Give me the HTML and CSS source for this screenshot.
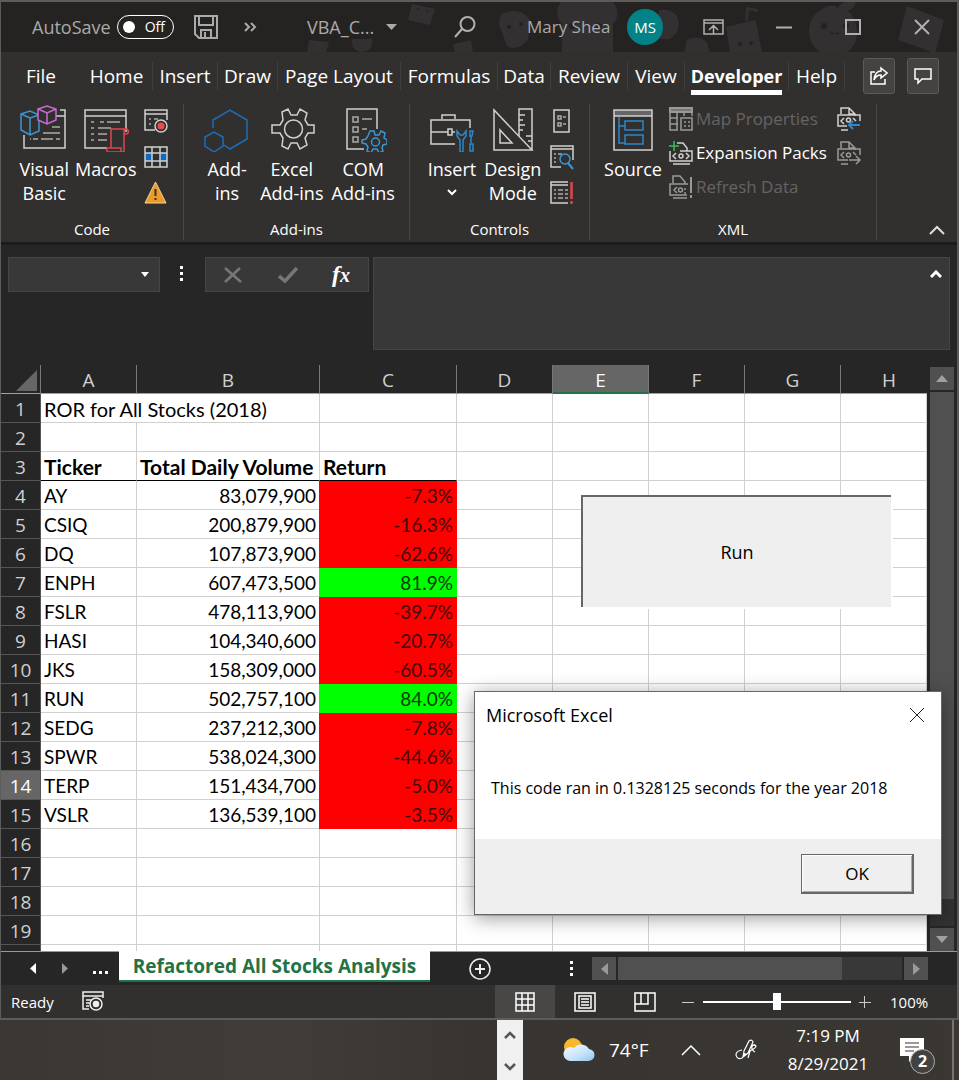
FILE: index.html
```
<!DOCTYPE html>
<html lang="en">
<head>
<meta charset="utf-8">
<meta name="viewport" content="width=device-width, initial-scale=1">
<title>VBA Challenge - Excel</title>
<link rel="stylesheet" href="styles.css">
</head>
<body>
<main class="window">
  <header class="titlebar">
    <svg class="doodles" viewBox="0 0 660 50" width="660" height="50" aria-hidden="true">
      <g fill="#333031">
        <path d="M115 2l23 5-5 16-22-5z"/><path d="M12 38l20 2-3 11H10z"/><path d="M55 37h20q2 12-10 13-11-1-10-13zM156 42l18-4 2 13h-18z"/>
        <path d="M205 12q18-8 28 6l-2 20q-12 12-21 6l-5-14q-6-10 0-18z"/>
        <path d="M264 0h52q9 12 0 22v29h-51V22q-9-10-1-22z"/>
        <path d="M362 8q18-2 20 13-1 12-10 16h-12zM390 38q12-6 20 3l3 10h-26z"/>
        <path d="M429 25l29-7 2 7 5 26h-32zM449 5l12 2-1 3-8-2-1 11h-3z"/>
        <path d="M523 8q12-8 18-2 4-8 18-6-2 8-9 8 10 8 10 22 0 16-13 21h-22q-14-8-13-24 1-12 11-19z"/>
        <path d="M610 4l37 14-9 33-37-13z"/>
      </g>
      <g fill="#242321"><circle cx="212" cy="25" r="2"/><circle cx="224" cy="22" r="2"/><circle cx="275" cy="24" r="3"/><circle cx="302" cy="24" r="3"/><circle cx="121" cy="7" r="1"/><circle cx="130" cy="9" r="1"/><circle cx="527" cy="24" r="3"/><circle cx="549" cy="24" r="3"/><circle cx="443" cy="42" r="2"/><circle cx="454" cy="41" r="2"/><path d="M534 29q4 5 8 0v3h-8z"/></g>
    </svg>
    <label class="autosave">AutoSave <span class="toggle"><input type="checkbox" aria-label="AutoSave"><span>Off</span></span></label>
    <button class="tool save" aria-label="Save"><svg width="26" height="26" viewBox="0 0 26 26"><path d="M2 2h22v22H6l-4-4zM6 2v9h14V2M8 24v-8h10v8M12 18v6" fill="none" stroke="#aaa" stroke-width="2"/></svg></button>
    <button class="tool more" aria-label="More commands"><svg width="14" height="12" viewBox="0 0 14 12"><path d="M2 2l4 4-4 4M8 2l4 4-4 4" fill="none" stroke="#aaa" stroke-width="2"/></svg></button>
    <button class="tool filename">VBA_C... <svg width="12" height="6"><path d="M0 0h11L5.500 6z" fill="#aaa"/></svg></button>
    <button class="tool search" aria-label="Search"><svg width="24" height="24" viewBox="0 0 24 24"><g fill="none" stroke="#b0b0b0" stroke-width="2"><circle cx="14.500" cy="9" r="7"/><path d="M9 14L2 22"/></g></svg></button>
    <button class="tool account"><span>Mary Shea</span><span class="avatar">MS</span></button>
    <button class="tool display" aria-label="Ribbon display options"><svg width="22" height="18" viewBox="0 0 22 18"><path d="M1 2h19v14H1zM1 5h19M10.500 16V8M6 12l4.500-4.500L15 12" fill="none" stroke="#b0b0b0" stroke-width="1.500"/></svg></button>
    <div class="caption">
      <button class="tool" aria-label="Minimize"><svg width="18" height="18"><path d="M1 9.500h16" stroke="#b0b0b0" stroke-width="2"/></svg></button>
      <button class="tool" aria-label="Maximize"><svg width="18" height="18"><path d="M2 2h14v14H2z" fill="none" stroke="#b0b0b0" stroke-width="2"/></svg></button>
      <button class="tool" aria-label="Close"><svg width="18" height="18"><path d="M2 2l14 14M16 2L2 16" stroke="#b0b0b0" stroke-width="2"/></svg></button>
    </div>
  </header>

  <div class="menu">
    <nav class="tabs" aria-label="Ribbon tabs">
      <a class="file" href="#file">File</a><a href="#home">Home</a><a href="#insert">Insert</a><a href="#draw">Draw</a><a href="#layout">Page Layout</a><a href="#formulas">Formulas</a><a href="#data">Data</a><a href="#review">Review</a><a href="#view">View</a><a class="active" href="#developer" aria-current="page"><span>Developer</span></a><a href="#help">Help</a>
    </nav>
    <div class="share">
      <button aria-label="Share"><svg width="18" height="20" viewBox="0 0 18 20"><path d="M5 6H1v12h14v-5M11 2l6 5-6 5V9Q6 9 4 14 5 5 11 5z" fill="none" stroke="#fff" stroke-width="1.500"/></svg></button>
      <button aria-label="Comments"><svg width="18" height="18" viewBox="0 0 18 18"><path d="M1 2h16v10H8l-4 4v-4H1z" fill="none" stroke="#fff" stroke-width="1.500"/></svg></button>
    </div>
  </div>

  <section class="ribbon" aria-label="Developer">
    <div class="group g-code">
      <div class="tools">
        <button class="big"><svg width="48" height="48" viewBox="0 0 48 48" fill="none" stroke="#d0cfce" stroke-width="2">
          <path d="M40 6h5v38H4V31M24 12h21" stroke-width="1.500"/><path d="M32 23h8M23 29h17M13 35h5M21 35h12M36 35h4M10 35h1" stroke="#aaa" stroke-width="1.500"/>
          <path d="M1 10l9-3 9 4v16l-9 4-9-5zM1 10l9 4 9-3M10 14v17" fill="#32302f" stroke="#3b96d2" stroke-width="1.500"/>
          <path d="M18 5l9-3 9 3v11l-9 4-9-4zM18 5l9 4 9-4M27 9v11" fill="#32302f" stroke="#c76bd1" stroke-width="1.500"/></svg><span>Visual<br>Basic</span></button>
        <button class="big"><svg width="48" height="48" viewBox="0 0 48 48" fill="none" stroke="#d0cfce" stroke-width="1.500">
          <path d="M25 44H3V6h41v22M3 12h41"/><path d="M9 18h3M18 18h4M25 18h13M9 24h3M16 24h13M9 30h3M16 30h9M9 36h3M16 36h9" stroke="#aaa"/>
          <path d="M29 25h16q3 3 0 5h-3v18H26q-2-1-1-4h4V25M42 30V27q0-2 3-2M29 44h10v4" stroke="#e0454d"/></svg><span>Macros</span></button>
        <div class="smalls">
          <button aria-label="Record Macro"><svg width="26" height="26" viewBox="0 0 26 26" fill="none" stroke="#d0cfce" stroke-width="1.500"><path d="M12 22H2V2h22v10M2 6h22"/><path d="M6 11h2M11 11h4M6 16h2" stroke="#aaa"/><circle cx="18" cy="18" r="6" fill="#32302f"/><circle cx="18" cy="18" r="3.500" fill="#e84c50" stroke="none"/></svg></button>
          <button aria-label="Use Relative References"><svg width="26" height="26" viewBox="0 0 26 26"><path d="M2 9h22v8H2z" fill="#0c6cc0"/><path d="M9 9h8v8H9z" fill="#32302f"/><path d="M2 3h22v20H2zM9 3v20M17 3v20M2 9h22M2 17h22" fill="none" stroke="#d0cfce" stroke-width="1.500"/></svg></button>
          <button aria-label="Macro Security"><svg width="26" height="26" viewBox="0 0 26 26"><path d="M12.500 2L2 23h21z" fill="#ed9b28" stroke="#f5d489"/><path d="M12.500 9v7M12.500 18v2" stroke="#333" stroke-width="2"/></svg></button>
        </div>
      </div>
      <h2>Code</h2>
    </div>
    <div class="group g-addins">
      <div class="tools">
        <button class="big"><svg width="48" height="48" viewBox="0 0 48 48" fill="none" stroke="#1c6dba" stroke-width="1.500"><path d="M10 24V16L27 6l17 10v19L27 45l-6-4M2 33l9-5 9 5v9l-9 6-9-6z"/></svg><span>Add-<br>ins</span></button>
        <button class="big"><svg width="48" height="48" viewBox="0 0 48 48" fill="none" stroke="#d0cfce" stroke-width="1.500"><path d="M14 8l6-3 3 6h6l3-6 7 4-2 7 3 5h6v8h-6l-3 5 2 7-7 4-3-6h-6l-3 6-6-3 1-8-3-5H4v-8h8l3-5z"/><circle cx="25.500" cy="25" r="9"/></svg><span>Excel<br>Add-ins</span></button>
        <button class="big"><svg width="48" height="48" viewBox="0 0 48 48" fill="none" stroke="#d0cfce" stroke-width="1.500"><path d="M25 45H8V5h30v20"/><path d="M14 13h5v5h-5zM14 23h5v5h-5zM14 33h5v5h-5zM23 15h10M23 25h5" stroke="#aaa"/><path d="M31 27h4l1 4h4l2-4 4 2-1 5 3 2v4l-4 1-1 3 1 3-4 2-2-4h-4l-2 4-4-2 1-4-2-3-4-1v-3l4-1 2-3z" stroke="#3b96d2"/><circle cx="36.500" cy="38" r="4" stroke="#3b96d2"/></svg><span>COM<br>Add-ins</span></button>
      </div>
      <h2>Add-ins</h2>
    </div>
    <div class="group g-controls">
      <div class="tools">
        <button class="big"><svg width="48" height="48" viewBox="0 0 48 48" fill="none" stroke="#d0cfce" stroke-width="1.500"><path d="M27 40H3V16h39v8M3 28h17M24 28h3M14 15v-4h13v4M20 25h4v6h-4z"/><path d="M29 27v5l3 4v12h3V36l3-4v-5l-3 4h-3zM42 27h3l-1 5h-2zM43 32v7M42 40h3v7h-3z" stroke="#2d87ca"/></svg><span>Insert</span><svg class="drop" width="10" height="8"><path d="M1 2l4 4 4-4" fill="none" stroke="#fff" stroke-width="2"/></svg></button>
        <button class="big"><svg width="48" height="48" viewBox="0 0 48 48" fill="none" stroke="#d0cfce" stroke-width="1.500"><path d="M5 6v40h38zM11 26v13h12zM30 32V5h13v41M30 11h6M30 16h4M30 21h6M30 26h4M37 32h6M39 37h4"/></svg><span>Design<br>Mode</span></button>
        <div class="smalls">
          <button aria-label="Properties"><svg width="26" height="26" viewBox="0 0 26 26" fill="none" stroke="#d0cfce" stroke-width="1.500"><path d="M5 2h15v22H5z"/><path d="M9 8h3v3H9zM9 15h3v3H9zM14 9h3M14 16h3" stroke="#aaa"/></svg></button>
          <button aria-label="View Code"><svg width="26" height="26" viewBox="0 0 26 26" fill="none" stroke="#d0cfce" stroke-width="1.500"><path d="M12 23H2V2h22v14M2 5h22"/><path d="M5 10h2M9 10h4M5 14h2M5 18h2" stroke="#aaa"/><circle cx="16" cy="15" r="5" stroke="#3b96d2"/><path d="M19 19l5 6" stroke="#3b96d2" stroke-width="2"/></svg></button>
          <button aria-label="Run Dialog"><svg width="26" height="26" viewBox="0 0 26 26" fill="none" stroke="#d0cfce" stroke-width="1.500"><path d="M19 23H2V2h17M2 5h17"/><path d="M5 10h2M9 10h5M16 10h3M5 14h2M9 14h5M16 14h3M5 18h2M9 18h5M16 18h3" stroke="#aaa"/><path d="M22.500 2v17M22.500 21v3" stroke="#e0454d" stroke-width="2.500"/></svg></button>
        </div>
      </div>
      <h2>Controls</h2>
    </div>
    <div class="group g-xml">
      <div class="tools">
        <button class="big"><svg width="48" height="48" viewBox="0 0 48 48" fill="none" stroke="#d0cfce" stroke-width="2"><path d="M5 6h38v6H5z" fill="#666" stroke="none"/><path d="M5 6h38v40H5zM5 12h38" stroke-width="1.500"/><path d="M10 13v26h6M10 22h6M16 17h18v9H16zM16 31h18v9H16z" stroke="#2d87ca" stroke-width="1.500"/></svg><span>Source</span></button>
        <div class="rows">
          <button disabled><svg width="26" height="26" viewBox="0 0 26 26" fill="none" stroke="#999" stroke-width="2"><path d="M2 2h22v4H2z" fill="#777"/><path d="M2 6v18h8M9 6v18M2 12h8M2 18h8M16 6v4M24 6v4M13 12h11v12H13zM16 16h2M20 16h2M16 20h2M20 20h2" stroke-width="1.500"/></svg>Map Properties</button>
          <button><svg width="26" height="26" viewBox="0 0 26 26" fill="none" stroke="#d0cfce" stroke-width="1.500"><path d="M9 3h6l4 5v3M2 11v10h22V11h-4M5 24h17M8 13l-3 3 3 3M18 13l3 3-3 3M12 11h8"/><circle cx="13" cy="16" r="2"/><path d="M6 1v10M1 6h10" stroke="#38c04a"/></svg>Expansion Packs</button>
          <button disabled><svg width="26" height="26" viewBox="0 0 26 26" fill="none" stroke="#999" stroke-width="1.500"><path d="M5 9V2h7l5 6v2M20 10H2v11h17M5 24h14M9 13l-3 3 3 3M17 14v2M17 18v2"/><circle cx="12.500" cy="16" r="2"/><path d="M23 3v16M23 21v3" stroke-width="2"/></svg>Refresh Data</button>
        </div>
        <div class="smalls io">
          <button aria-label="Import"><svg width="26" height="26" viewBox="0 0 26 26" fill="none" stroke="#d0cfce" stroke-width="1.500"><path d="M5 8V2h8l6 6v2M11 20H2V9h22v6M5 24h7M8 12l-3 3 3 3M17 12l3 3M13 2v6h6"/><circle cx="12.500" cy="14" r="2"/><path d="M24 19H13M17 15l-4 4 4 4" stroke="#2d87ca" stroke-width="2"/></svg></button>
          <button aria-label="Export" disabled><svg width="26" height="26" viewBox="0 0 26 26" fill="none" stroke="#999" stroke-width="1.500"><path d="M5 8V2h8l6 6v2M12 20H2V9h22v6M5 24h7M8 12l-3 3 3 3M17 12l3 3M13 2v6h6M13 20h11M20 16l4 4-4 4"/><circle cx="12.500" cy="15" r="2"/></svg></button>
        </div>
      </div>
      <h2>XML</h2>
    </div>
    <button class="collapse" aria-label="Collapse ribbon"><svg width="18" height="12"><path d="M2 10l7-7 7 7" fill="none" stroke="#ddd" stroke-width="2"/></svg></button>
  </section>

  <section class="formula" aria-label="Formula bar">
    <div class="namebox"><input aria-label="Name box"><svg width="8" height="5"><path d="M0 0h8L4 5z" fill="#fff"/></svg></div>
    <svg class="dots" width="4" height="16"><path d="M0 0h3v3H0zM0 6h3v3H0zM0 12h3v3H0z" fill="#fff"/></svg>
    <div class="fx">
      <button aria-label="Cancel"><svg width="20" height="18"><path d="M2 2l16 14M17 2L2 16" stroke="#777" stroke-width="2.500"/></svg></button>
      <button aria-label="Enter"><svg width="20" height="18"><path d="M1 10l6 5L19 2" fill="none" stroke="#777" stroke-width="3.500"/></svg></button>
      <button class="fn" aria-label="Insert function">f<span>x</span></button>
    </div>
    <div class="entry"><textarea aria-label="Formula"></textarea><svg width="12" height="9"><path d="M1 7l5-5 5 5" fill="none" stroke="#fff" stroke-width="3"/></svg></div>
  </section>

  <section class="sheet">
    <div class="cells">
      <table>
        <colgroup><col class="w-row"><col class="w-std"><col class="w-b"><col class="w-c"><col class="w-std"><col class="w-std"><col class="w-std"><col class="w-std"><col></colgroup>
        <thead><tr><th class="corner"><svg width="21" height="21"><path d="M21 0v21H0z" fill="#666"/></svg></th><th>A</th><th>B</th><th>C</th><th>D</th><th class="sel">E</th><th>F</th><th>G</th><th class="last">H</th></tr></thead>
        <tbody>
          <tr><th>1</th><td class="title" colspan="2">ROR for All Stocks (2018)</td><td></td><td></td><td></td><td></td><td></td><td></td></tr>
          <tr><th>2</th><td></td><td></td><td></td><td></td><td></td><td></td><td></td><td></td></tr>
          <tr class="heads"><th>3</th><td>Ticker</td><td>Total Daily Volume</td><td>Return</td><td></td><td></td><td></td><td></td><td></td></tr>
          <tr><th>4</th><td>AY</td><td class="num">83,079,900</td><td class="num down">-7.3%</td><td></td><td></td><td></td><td></td><td></td></tr>
          <tr><th>5</th><td>CSIQ</td><td class="num">200,879,900</td><td class="num down">-16.3%</td><td></td><td></td><td></td><td></td><td></td></tr>
          <tr><th>6</th><td>DQ</td><td class="num">107,873,900</td><td class="num down">-62.6%</td><td></td><td></td><td></td><td></td><td></td></tr>
          <tr><th>7</th><td>ENPH</td><td class="num">607,473,500</td><td class="num up">81.9%</td><td></td><td></td><td></td><td></td><td></td></tr>
          <tr><th>8</th><td>FSLR</td><td class="num">478,113,900</td><td class="num down">-39.7%</td><td></td><td></td><td></td><td></td><td></td></tr>
          <tr><th>9</th><td>HASI</td><td class="num">104,340,600</td><td class="num down">-20.7%</td><td></td><td></td><td></td><td></td><td></td></tr>
          <tr><th>10</th><td>JKS</td><td class="num">158,309,000</td><td class="num down">-60.5%</td><td></td><td></td><td></td><td></td><td></td></tr>
          <tr><th>11</th><td>RUN</td><td class="num">502,757,100</td><td class="num up">84.0%</td><td></td><td></td><td></td><td></td><td></td></tr>
          <tr><th>12</th><td>SEDG</td><td class="num">237,212,300</td><td class="num down">-7.8%</td><td></td><td></td><td></td><td></td><td></td></tr>
          <tr><th>13</th><td>SPWR</td><td class="num">538,024,300</td><td class="num down">-44.6%</td><td></td><td></td><td></td><td></td><td></td></tr>
          <tr><th class="sel">14</th><td>TERP</td><td class="num">151,434,700</td><td class="num down">-5.0%</td><td></td><td></td><td></td><td></td><td></td></tr>
          <tr><th>15</th><td>VSLR</td><td class="num">136,539,100</td><td class="num down">-3.5%</td><td></td><td></td><td></td><td></td><td></td></tr>
          <tr><th>16</th><td></td><td></td><td></td><td></td><td></td><td></td><td></td><td></td></tr>
          <tr><th>17</th><td></td><td></td><td></td><td></td><td></td><td></td><td></td><td></td></tr>
          <tr><th>18</th><td></td><td></td><td></td><td></td><td></td><td></td><td></td><td></td></tr>
          <tr><th>19</th><td></td><td></td><td></td><td></td><td></td><td></td><td></td><td></td></tr>
          <tr class="cut"><th></th><td></td><td></td><td></td><td></td><td></td><td></td><td></td><td></td></tr>
        </tbody>
      </table>
      <button class="run">Run</button>
    </div>
    <div class="vscroll">
      <button aria-label="Scroll up"><svg width="12" height="7"><path d="M0 7h12L6 0z" fill="#a0a0a0"/></svg></button>
      <div class="vtrack"><div class="vthumb"></div></div>
      <button aria-label="Scroll down"><svg width="12" height="7"><path d="M0 0h12L6 7z" fill="#a0a0a0"/></svg></button>
    </div>
    <section class="dialog" role="dialog" aria-labelledby="dlg-title">
      <header><h1 id="dlg-title">Microsoft Excel</h1><button aria-label="Close dialog"><svg width="16" height="16"><path d="M1 1l14 14M15 1L1 15" stroke="#222" stroke-width="1"/></svg></button></header>
      <p>This code ran in 0.1328125 seconds for the year 2018</p>
      <footer><button>OK</button></footer>
    </section>
  </section>

  <section class="sheetbar">
    <div class="sheetnav">
      <button aria-label="Previous sheet"><svg width="6" height="12"><path d="M6 0v11L0 5.500z" fill="#fff"/></svg></button>
      <button aria-label="Next sheet"><svg width="6" height="12"><path d="M0 0v11l6-5.500z" fill="#999"/></svg></button>
      <button aria-label="More sheets"><svg width="16" height="12"><path d="M0 8h3v3H0zM6 8h3v3H6zM12 8h3v3h-3z" fill="#fff"/></svg></button>
    </div>
    <a class="sheettab" href="#sheet">Refactored All Stocks Analysis</a>
    <button class="add" aria-label="New sheet"><svg width="24" height="24" fill="none" stroke="#eee"><circle cx="12" cy="12" r="10" stroke-width="1.500"/><path d="M12 7v10M7 12h10" stroke-width="2"/></svg></button>
    <svg class="dots" width="4" height="16"><path d="M0 0h3v3H0zM0 6h3v3H0zM0 12h3v3H0z" fill="#fff"/></svg>
    <div class="hscroll">
      <button aria-label="Scroll left"><svg width="7" height="12"><path d="M7 0v12L0 6z" fill="#999"/></svg></button>
      <div class="htrack"><div class="hthumb"></div></div>
      <button aria-label="Scroll right"><svg width="7" height="12"><path d="M0 0v12l7-6z" fill="#999"/></svg></button>
    </div>
  </section>

  <footer class="status">
    <span>Ready</span>
    <button class="rec" aria-label="Record macro"><svg width="24" height="22" viewBox="0 0 24 22" fill="none" stroke="#eee" stroke-width="1.500"><path d="M8 18H2V1h20v6M2 5h20M5 9h5M5 12h4M5 15h3"/><circle cx="15" cy="13" r="6"/><circle cx="15" cy="13" r="2.500" fill="#eee"/></svg></button>
    <div class="views">
      <button class="on" aria-label="Normal"><svg width="22" height="22"><path d="M2 2h18v18H2zM8 2v18M14 2v18M2 8h18M2 14h18" fill="none" stroke="#fff" stroke-width="1.500"/></svg></button>
      <button aria-label="Page Layout"><svg width="24" height="22"><path d="M2 2h20v18H2zM6 5h12v12H6zM8 8h8M8 11h8M8 14h8" fill="none" stroke="#fff" stroke-width="1.500"/></svg></button>
      <button aria-label="Page Break Preview"><svg width="24" height="22"><path d="M2 2h20v18H2zM2 13h13V2M8 2v11" fill="none" stroke="#fff" stroke-width="1.500"/></svg></button>
    </div>
    <button class="zoom" aria-label="Zoom out"><svg width="12" height="12"><path d="M0 6.500h12" stroke="#ccc"/></svg></button>
    <input class="slider" type="range" min="0" max="100" value="50" aria-label="Zoom">
    <button class="zoom" aria-label="Zoom in"><svg width="12" height="12"><path d="M0 6.500h12M5.500 0v12" stroke="#ccc"/></svg></button>
    <span class="percent">100%</span>
  </footer>
</main>

<footer class="taskbar">
  <div class="mini">
    <svg width="14" height="10"><path d="M2 8l5-5 5 5" fill="none" stroke="#555" stroke-width="2.500"/></svg>
    <svg width="14" height="10"><path d="M2 2l5 5 5-5" fill="none" stroke="#555" stroke-width="2.500"/></svg>
  </div>
  <button class="weather"><svg width="32" height="26" viewBox="0 0 32 26"><defs><linearGradient id="c" x2="1" y2="1"><stop stop-color="#f5faff"/><stop offset=".6" stop-color="#c4e2fa"/><stop offset="1" stop-color="#8fc3ee"/></linearGradient></defs><circle cx="10" cy="10" r="9" fill="#f8b72d"/><path d="M8 24a7 7 0 0 1-1-14q2 0 4 1a9 9 0 0 1 15 1 6 6 0 0 1-1 12z" fill="url(#c)"/></svg><span>74°F</span></button>
  <button class="tray" aria-label="Show hidden icons"><svg width="20" height="12"><path d="M1 11l9-9 9 9" fill="none" stroke="#fff" stroke-width="1.500"/></svg></button>
  <button class="tray pen" aria-label="Pen"><svg width="24" height="24" viewBox="0 0 24 24" fill="none" stroke="#fff" stroke-width="1.200"><path d="M8 12q-6 1-6 5 1 5 6 3 3-2 3-5M9 19l1-6 5-10q3-2 4 1l-5 11zM14 20l2-7q6-3 6-5-2-2-4 0-1 4 3 6"/></svg></button>
  <time class="clock" datetime="2021-08-29T19:19"><span>7:19 PM</span><span>8/29/2021</span></time>
  <button class="notes" aria-label="Notifications"><svg width="25" height="28"><path d="M0 2h24v18H15l-6 6v-6H0z" fill="#fff"/><path d="M5 7h14M5 11h14M5 15h9" stroke="#3a3633"/></svg><span>2</span></button>
</footer>
</body>
</html>
```
FILE: styles.css
```
* { box-sizing: border-box; }
body { margin: 0; min-height: 100vh; background: #3a3733; color: #fff; font: 19px/24px "Open Sans", "Noto Sans", sans-serif; }
button { padding: 0; border: 0; background: none; color: inherit; font: inherit; }
a { color: inherit; text-decoration: none; }
svg { display: block; flex: none; }
h1, h2, p { margin: 0; font-weight: 400; }
.window { display: flex; flex-direction: column; background: #262626; border: solid #5c5c5a; border-width: 2px 2px 2px 1px; }

/* Title bar */
.titlebar { position: relative; display: flex; align-items: center; height: 50px; padding-left: 31px; background: #242322; color: #aaa; font-size: 18px; }
.doodles { position: absolute; right: 0; top: 0; }
.titlebar > :not(.doodles) { position: relative; }
.autosave { display: flex; align-items: center; width: 142px; justify-content: space-between; }
.toggle { display: flex; align-items: center; justify-content: space-between; width: 57px; height: 24px; padding: 0 8px 0 5px; border: 1px solid #fff; border-radius: 12px; color: #fff; font-size: 14px; }
.toggle input { appearance: none; width: 12px; height: 12px; margin: 0; border-radius: 50%; background: #fff; }
.save { margin-left: 19px; }
.more { margin-left: 24px; }
.filename { display: flex; align-items: center; justify-content: space-between; width: 91px; margin-left: 50px; }
.search { margin-left: 55px; }
.account { display: flex; align-items: center; justify-content: space-between; width: 136px; margin-left: 50px; font-size: 17px; }
.avatar { width: 36px; border-radius: 50%; background: #038387; color: #fff; font-size: 15px; line-height: 36px; }
.display { margin-left: 40px; }
.caption { display: flex; flex: 1; justify-content: flex-end; gap: 51px; padding-right: 26px; }

/* Tabs */
.menu { display: flex; align-items: center; height: 47px; padding: 0 18px 0 16px; background: #32302f; }
.tabs { display: grid; flex: 1; grid-template-columns: 64fr 72fr 65fr 60fr 123fr 97fr 53fr 77fr 57fr 104fr 56fr; text-align: center; white-space: nowrap; }
.tabs a { border-right: 1px solid #403f3e; line-height: 28px; }
.tabs .file { padding-right: 16px; border: 0; }
.tabs .active { font-weight: 700; font-size: 18px; }
.active span { display: inline-block; box-shadow: 0 5px #fff; }
.share { display: flex; gap: 12px; margin-left: 18px; }
.share button { display: grid; place-items: center; width: 32px; height: 36px; border: 1px solid #5c5b5a; border-radius: 3px; background: #444342; }

/* Ribbon */
.ribbon { display: flex; height: 143px; padding: 5px 11px 2px 0; background: #32302f; font-size: 18px; }
.group { display: flex; flex-direction: column; justify-content: space-between; border-right: 1px solid #484746; }
.group h2 { font-size: 15px; line-height: 22px; text-align: center; }
.tools { display: flex; align-items: flex-start; justify-content: center; }
.big { display: flex; flex-direction: column; align-items: center; gap: 5px; line-height: 24px; white-space: nowrap; }
.drop { margin-top: 2px; }
.smalls { display: flex; flex-direction: column; gap: 10px; padding-top: 4px; }
.g-code { width: 183px; }
.g-code .tools { gap: 6px; padding-left: 4px; }
.g-addins { width: 226px; }
.g-addins .tools { gap: 8px; padding-left: 4px; }
.g-addins .big:first-child { width: 50px; }
.g-controls { width: 180px; }
.g-controls .tools { gap: 8px; padding-left: 4px; }
.g-xml { width: 287px; }
.g-xml .tools { gap: 6px; }
.rows { display: flex; flex-direction: column; gap: 8px; width: 160px; padding-top: 2px; font-size: 17px; white-space: nowrap; }
.rows button { display: flex; align-items: center; gap: 2px; height: 26px; }
.rows button:disabled { color: #666463; }
.io { gap: 8px; padding: 2px 0 0 2px; }
.collapse { align-self: flex-end; margin: 0 0 4px auto; }

/* Formula bar */
.formula { display: flex; align-items: flex-start; height: 123px; padding: 12px 7px 0; border-top: 3px solid #1c1c1c; }
.formula input, .formula textarea { flex: 1; min-width: 0; padding: 0 6px; border: 0; outline: 0; background: none; color: #fff; font: inherit; resize: none; }
.namebox, .fx, .entry { display: flex; align-items: center; border: 1px solid #454545; background: #383838; }
.namebox { width: 152px; height: 35px; padding-right: 10px; }
.formula .dots { margin: 9px 21px 0 20px; }
.fx { width: 164px; height: 35px; padding: 0 18px 0 17px; justify-content: space-between; }
.fn { font: italic 700 24px/30px "Liberation Serif", serif; }
.fn span { font-size: 20px; }
.entry { flex: 1; height: 93px; margin-left: 4px; padding: 12px 7px; align-items: flex-start; }
.entry textarea { align-self: stretch; }

/* Grid */
.sheet { position: relative; display: flex; }
.cells { position: relative; flex: 1; min-width: 0; }
table { width: 100%; table-layout: fixed; border-collapse: separate; border-spacing: 0; background: #fff; color: #000; font: 19px/26px Lato, sans-serif; }
.w-row { width: 40px; }
.w-std { width: 96px; }
.w-b { width: 183px; }
.w-c { width: 137px; }
td, th { height: 29px; padding: 2px 3px 0; border: solid #d0d0d0; border-width: 0 1px 1px 0; white-space: nowrap; }
th { padding: 2px 0 0; border-color: #555; background: #262626; color: #d0d0d0; font: 19px/26px "Open Sans", sans-serif; text-align: center; }
thead th { border-color: #777; border-bottom-color: #a0a0a0; }
.corner svg { margin: 0 0 0 15px; }
th.sel { background: #666; color: #fff; }
thead th.sel { border-bottom-color: #217346; box-shadow: inset 0 -1px #217346; }
thead .last { padding-left: 10px; border-right: 0; }
.title { font-size: 20px; }
.heads td:nth-child(-n+4) { border-bottom-color: #000; font-size: 21px; font-weight: 700; }
.num { text-align: right; }
.down, .up { border-color: red; background: red; box-shadow: -1px 0 red; color: #410b0b; }
.up { border-color: lime; background: lime; box-shadow: -1px 0 lime; color: #073807; }
.cut td, .cut th { height: 6px; padding: 0; border-bottom: 0; line-height: 6px; }
.run { position: absolute; left: 580px; top: 130px; width: 310px; height: 112px; border: solid #666; border-width: 2px 0 0 2px; background: #efefef; box-shadow: 2px 2px #fff; color: #000; font-family: "Open Sans", sans-serif; font-size: 18px; }
.vscroll { display: flex; flex-direction: column; gap: 2px; width: 30px; padding: 2px 3px 0 3px; }
.vscroll button, .hscroll button { display: grid; place-items: center; flex: none; width: 24px; height: 23px; background: #505050; }
.vtrack { flex: 1; background: #333; }
.vthumb { height: 95%; background: #505050; }

/* Message box */
.dialog { position: absolute; right: 15px; bottom: 36px; display: flex; flex-direction: column; width: 468px; height: 224px; border: 1px solid #666; background: #fff; box-shadow: 0 3px 18px #0006; color: #000; font-size: 17px; }
.dialog header { display: flex; align-items: center; justify-content: space-between; height: 45px; padding: 0 16px 0 11px; }
.dialog h1 { font-size: 18px; }
.dialog p { flex: 1; padding: 39px 16px 0; font-size: 16px; white-space: nowrap; }
.dialog footer { display: flex; justify-content: flex-end; height: 75px; padding: 15px 27px 0 0; background: #efefef; }
.dialog footer button { width: 113px; height: 40px; border: solid #666; border-width: 1px 2px 2px 1px; background: #efefef; box-shadow: inset 1px 1px #fff, inset -1px -1px #aaa; }

/* Sheet tabs */
.sheetbar { display: flex; align-items: center; height: 34px; border-top: 1px solid #999; }
.sheetnav { display: flex; justify-content: space-between; width: 118px; padding: 0 10px 0 29px; }
.sheettab { align-self: flex-start; width: 311px; height: 31px; margin-top: -1px; border-bottom: 2px solid #217346; background: #fff; color: #217346; font-size: 19px; font-weight: 700; line-height: 30px; text-align: center; white-space: nowrap; }
.add { margin-left: 38px; }
.sheetbar .dots { margin: 0 18px 0 auto; }
.hscroll { display: flex; gap: 2px; width: 336px; margin-right: 29px; }
.htrack { flex: 1; background: #383838; }
.hthumb { width: 79%; height: 100%; background: #505050; }

/* Status bar */
.status { display: flex; align-items: center; height: 33px; padding: 0 27px 0 10px; background: #32302f; font-size: 15px; }
.rec { margin-left: 27px; }
.views { display: flex; align-self: stretch; margin-left: auto; }
.views button { display: grid; place-items: center; width: 60px; }
.views .on { background: #484746; }
.zoom { margin-left: 7px; }
.slider { appearance: none; width: 148px; height: 18px; margin: 0 1px 0 9px; background: linear-gradient(#fff, #fff) center / 100% 2px no-repeat; }
.slider::-webkit-slider-thumb { appearance: none; width: 8px; height: 17px; background: #fff; }
.percent { width: 40px; margin-left: 19px; }

/* Taskbar */
.taskbar { display: flex; align-items: center; justify-content: flex-end; height: 60px; padding-right: 5px; background: linear-gradient(90deg, #3a3733, #403c3a 30%, #373431 50%, #3a3733); }
.mini { display: flex; flex-direction: column; align-items: center; justify-content: space-between; align-self: stretch; width: 26px; padding: 10px 0 8px; background: #f0f0f0; }
.weather { display: flex; align-items: center; gap: 14px; width: 90px; margin-left: 40px; }
.tray { margin-left: 28px; }
.pen { margin-left: 33px; }
.clock { display: flex; flex-direction: column; width: 84px; margin: 0 30px 0 28px; font-size: 17px; line-height: 28px; text-align: center; }
.notes { position: relative; display: flex; width: 54px; height: 60px; padding-top: 16px; border-right: 2px solid #77746f; }
.notes span { position: absolute; left: 10px; top: 29px; width: 25px; border: 1px solid #aaa; border-radius: 50%; background: #444241; font-size: 16px; font-weight: 700; line-height: 23px; }
```
